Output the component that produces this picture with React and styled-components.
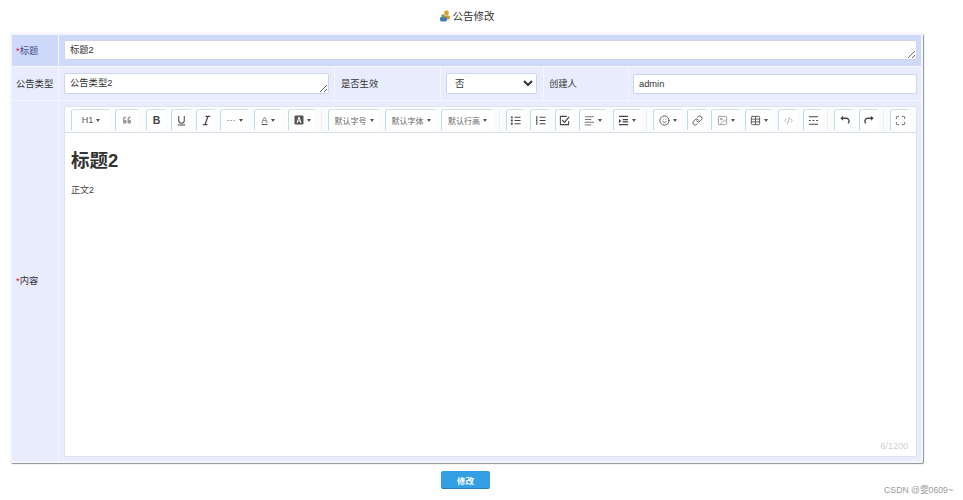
import React from 'react';
import styled, { createGlobalStyle } from 'styled-components';
import { LuSmile, LuLink, LuImage, LuTable, LuCodeXml, LuMaximize } from 'react-icons/lu';
import { FaQuoteLeft } from 'react-icons/fa';

const Global = createGlobalStyle`
  html, body { margin: 0; padding: 0; background: #fff; }
  body { width: 963px; height: 500px; overflow: hidden; position: relative; font-family: "Liberation Sans", "Noto Sans CJK SC", sans-serif; font-size: 10px; color: #333; }
`;
const Page = styled.div`display: flex; flex-direction: column; align-items: center; width: 933px; height: 500px;`;
const Title = styled.h1`
  margin: 0; height: 33px; padding-bottom: 2px; box-sizing: border-box; display: flex; align-items: center; justify-content: center; gap: 2px;
  font-size: 10.5px; line-height: 12px; font-weight: 400; color: #333;
`;
const Panel = styled.div`
  width: 913px; height: 430px; box-sizing: border-box; padding: 2px; background: #f4f6fe; border-radius: 2px;
  box-shadow: 0 0 1px #ccc, 1px 1px 1px #8a8a8a;
  display: grid; grid-template-rows: 31px 33px 360px; row-gap: 1px;
`;
const Row = styled.div`
  display: grid; grid-template-columns: ${p => p.$cols}; grid-template-rows: minmax(0, 1fr); column-gap: 1px; min-height: 0;
`;
const Label = styled.div`
  background: ${p => p.$strong ? '#cfd9fa' : '#e8ecfd'}; display: flex; align-items: center; font-size: 9.3px; line-height: 12px;
  padding-left: ${p => p.$pad || 4}px; color: ${p => p.$strong ? '#4a4a8c' : '#333'};
`;
const Star = styled.span`color: #e02020;`;
const Cell = styled.div`
  background: ${p => p.$strong ? '#cfd9fa' : '#e8ecfd'}; box-sizing: border-box; padding: ${p => p.$pad || '5px'}; display: flex; min-width: 0; min-height: 0;
`;
const Area = styled.textarea`
  flex: 1; min-width: 0; height: 100%; box-sizing: border-box; margin: 0; padding: 3px 5px; border: 1px solid #d0d6ea; border-radius: 2px;
  background: #fff; font: 9.3px/12px "Liberation Sans", "Noto Sans CJK SC", sans-serif; color: #333; outline: none;
`;
const Input = styled.input`
  flex: 1; min-width: 0; box-sizing: border-box; margin: 0; padding: 0 5px; border: 1px solid #d0d6ea; border-radius: 2px;
  background: #fff; font: 9.3px "Liberation Sans", "Noto Sans CJK SC", sans-serif; color: #333; outline: none;
`;
const Select = styled.select`
  flex: 1; min-width: 0; height: 100%; box-sizing: border-box; margin: 0; padding: 0 4px; border: 1px solid #d0d6ea; border-radius: 2px;
  background: #fff; font: 9.5px "Liberation Sans", "Noto Sans CJK SC", sans-serif; color: #333; outline: none;
`;
const Editor = styled.div`
  flex: 1; display: flex; flex-direction: column; background: #fff; border: 1px solid #dfe3ee; min-width: 0; position: relative;
`;
const Toolbar = styled.div`
  height: 26px; box-sizing: border-box; border-bottom: 1px solid #dcdfe6; background: #fbfcfe; display: flex; align-items: flex-end; padding: 0 0 2px 6px; flex: none;
`;
const Tool = styled.div`
  width: ${p => p.$w}px; height: 21px; margin-right: ${p => p.$gap ?? 5}px; box-sizing: border-box; flex: none;
  border-left: 1px solid #bcdde6; border-top: 1px solid #cfe4ea; border-top-left-radius: 3px; background: #fff;
  display: flex; align-items: center; justify-content: center; gap: 2px; color: ${p => p.$dim ? '#999' : '#555'}; font-size: 9px; white-space: nowrap;
`;
const Sep = styled.div`width: 1px; height: 22px; margin: 0 6px 0 0; background: #eceef3; flex: none;`;
const Caret = styled.i`display: inline-block; width: 0; height: 0; border: 2px solid transparent; border-top: 3px solid #555; border-bottom: 0; margin-left: 1px;`;
const Strong = styled.span`font-size: 10.5px; font-weight: 700; color: #444;`;
const Body = styled.div`flex: 1; padding: 14px 6px 0; position: relative;`;
const Heading = styled.h2`margin: 0 0 10px; font-size: 18.5px; line-height: 27px; font-weight: 700; color: #333;`;
const Para = styled.p`margin: 0; font-size: 9px; line-height: 12px; color: #444;`;
const Count = styled.span`position: absolute; right: 8px; bottom: 5px; font-size: 9px; color: #d0d0d0;`;
const Submit = styled.button`
  margin-top: 8px; margin-left: -2px; width: 49px; height: 17px; padding: 0; border: 0; border-radius: 2px; background: #34a0e4; color: #fff;
  font: 700 8.5px "Liberation Sans", "Noto Sans CJK SC", sans-serif; box-shadow: 0 1px 0 #2a7fb8;
`;
const Mark = styled.span`position: absolute; right: 10px; bottom: 4px; font-size: 8.7px; color: #9a9a9a;`;
const Text = styled.span`font-size: 8px; color: #666;`;

const sz = { size: 11, strokeWidth: 2 };
const Svg = ({ children, fill = 'none' }) => (
  <svg width="11" height="11" viewBox="0 0 12 12" fill={fill} stroke="#444" strokeWidth="1.1">{children}</svg>
);
const Hr = () => <Svg><path d="M1 2h10M1 6h2M5 6h2M9 6h2M1 10h10" /></Svg>;
const Underline = () => <Svg><path d="M3 1v5a3 3 0 0 0 6 0V1M2 11h8" /></Svg>;
const Italic = () => <Svg><path d="M5 1.5h5M2 10.5h5M7.5 1.5l-3 9" strokeWidth="1.4" /></Svg>;
const Bullets = () => (
  <Svg>
    <path d="M5 2.5h6.5M5 6h6.5M5 9.5h6.5" />
    <path d="M1 2.5h2M1 6h2M1 9.5h2" strokeWidth="2" />
  </Svg>
);
const Ordered = () => <Svg><path d="M5 2.5h6.5M5 6h6.5M5 9.5h6.5M2 1v10M1 6h1.5" /></Svg>;
const Check = () => <Svg><path d="M10.5 6.5v4h-9v-9h7" /><path d="M3.5 5.5l2.5 2.5 5-6" strokeWidth="1.3" /></Svg>;
const Align = () => <Svg><path d="M1 2h10M1 5h7M1 8h10M1 11h7" stroke="#777" /></Svg>;
const Indent = () => (
  <Svg>
    <path d="M1 1.5h10M5 5h6M5 7.5h6M1 10.5h10" strokeWidth="1.4" />
    <path d="M1 4l2.5 2.5L1 9z" fill="#444" stroke="none" />
  </Svg>
);
const Undo = () => <Svg><path d="M3 3.5h4.5a3.2 3.2 0 0 1 2.5 5.5" strokeWidth="1.5" /><path d="M4.5 .8L1.5 3.5l3 2.7z" fill="#444" stroke="none" /></Svg>;
const Redo = () => <Svg><path d="M9 3.5H4.5A3.2 3.2 0 0 0 2 9" strokeWidth="1.5" /><path d="M7.5 .8l3 2.7-3 2.7z" fill="#444" stroke="none" /></Svg>;
const UserIcon = () => (
  <svg width="12" height="12" viewBox="0 0 12 12">
    <circle cx="7.5" cy="3" r="2.4" fill="#e0a030" />
    <rect x="4" y="5.5" width="7" height="4" rx="1.5" fill="#d89a2c" />
    <rect x="1" y="7" width="7" height="4.5" rx="1.4" fill="#4a78c0" />
    <circle cx="4" cy="6" r="1.7" fill="#6ea04a" />
  </svg>
);
const BgA = () => (
  <svg width="10" height="10" viewBox="0 0 10 10"><rect x=".5" y=".5" width="9" height="9" rx="1" fill="#555" /><path d="M3 8l2-6 2 6M3.8 6h2.4" stroke="#fff" fill="none" /></svg>
);

export default function App() {
  return (
    <Page>
      <Global />
      <Title><UserIcon />公告修改</Title>
      <Panel>
        <Row $cols="46px 1fr">
          <Label $strong><Star>*</Star>标题</Label>
          <Cell $strong $pad="5px 4px 6px 5px"><Area rows={1} defaultValue="标题2" /></Cell>
        </Row>
        <Row $cols="46px 275px 105px 102px 84px 1fr">
          <Label>公告类型</Label>
          <Cell $pad="6px 5px"><Area rows={1} defaultValue="公告类型2" /></Cell>
          <Label $pad={6}>是否生效</Label>
          <Cell $pad="6px 6px 6px 5px"><Select defaultValue="否"><option>否</option><option>是</option></Select></Cell>
          <Label $pad={5}>创建人</Label>
          <Cell $pad="7px 4px 6px 4px"><Input defaultValue="admin" /></Cell>
        </Row>
        <Row $cols="46px 1fr">
          <Label><Star>*</Star>内容</Label>
          <Cell $pad="5px 4px 4px 5px">
            <Editor>
              <Toolbar>
                <Tool $w={39}><span>H1</span><Caret /></Tool>
                <Tool $w={23} $gap={8} $dim><FaQuoteLeft size={8} /></Tool>
                <Tool $w={20}><Strong>B</Strong></Tool>
                <Tool $w={20}><Underline /></Tool>
                <Tool $w={19}><Italic /></Tool>
                <Tool $w={28} $gap={6}>···<Caret /></Tool>
                <Tool $w={27} $gap={7}><u>A</u><Caret /></Tool>
                <Tool $w={27} $gap={6}><BgA /><Caret /></Tool>
                <Sep />
                <Tool $w={51} $gap={6}><Text>默认字号</Text><Caret /></Tool>
                <Tool $w={51} $gap={5}><Text>默认字体</Text><Caret /></Tool>
                <Tool $w={52} $gap={6}><Text>默认行高</Text><Caret /></Tool>
                <Sep />
                <Tool $w={18} $gap={6}><Bullets /></Tool>
                <Tool $w={19} $gap={6}><Ordered /></Tool>
                <Tool $w={18} $gap={6}><Check /></Tool>
                <Tool $w={27} $gap={7}><Align /><Caret /></Tool>
                <Tool $w={27} $gap={6}><Indent /><Caret /></Tool>
                <Sep />
                <Tool $w={29}><LuSmile {...sz} /><Caret /></Tool>
                <Tool $w={19}><LuLink {...sz} /></Tool>
                <Tool $w={29} $dim><LuImage {...sz} /><Caret /></Tool>
                <Tool $w={27} $gap={6}><LuTable {...sz} /><Caret /></Tool>
                <Tool $w={19} $gap={6} $dim><LuCodeXml size={9} /></Tool>
                <Tool $w={19} $gap={5}><Hr /></Tool>
                <Sep />
                <Tool $w={19} $gap={6}><Undo /></Tool>
                <Tool $w={19} $gap={5}><Redo /></Tool>
                <Sep />
                <Tool $w={19} $gap={0}><LuMaximize {...sz} /></Tool>
              </Toolbar>
              <Body>
                <Heading>标题2</Heading>
                <Para>正文2</Para>
                <Count>6/1200</Count>
              </Body>
            </Editor>
          </Cell>
        </Row>
      </Panel>
      <Submit>修改</Submit>
      <Mark>CSDN @雯0609~</Mark>
    </Page>
  );
}
